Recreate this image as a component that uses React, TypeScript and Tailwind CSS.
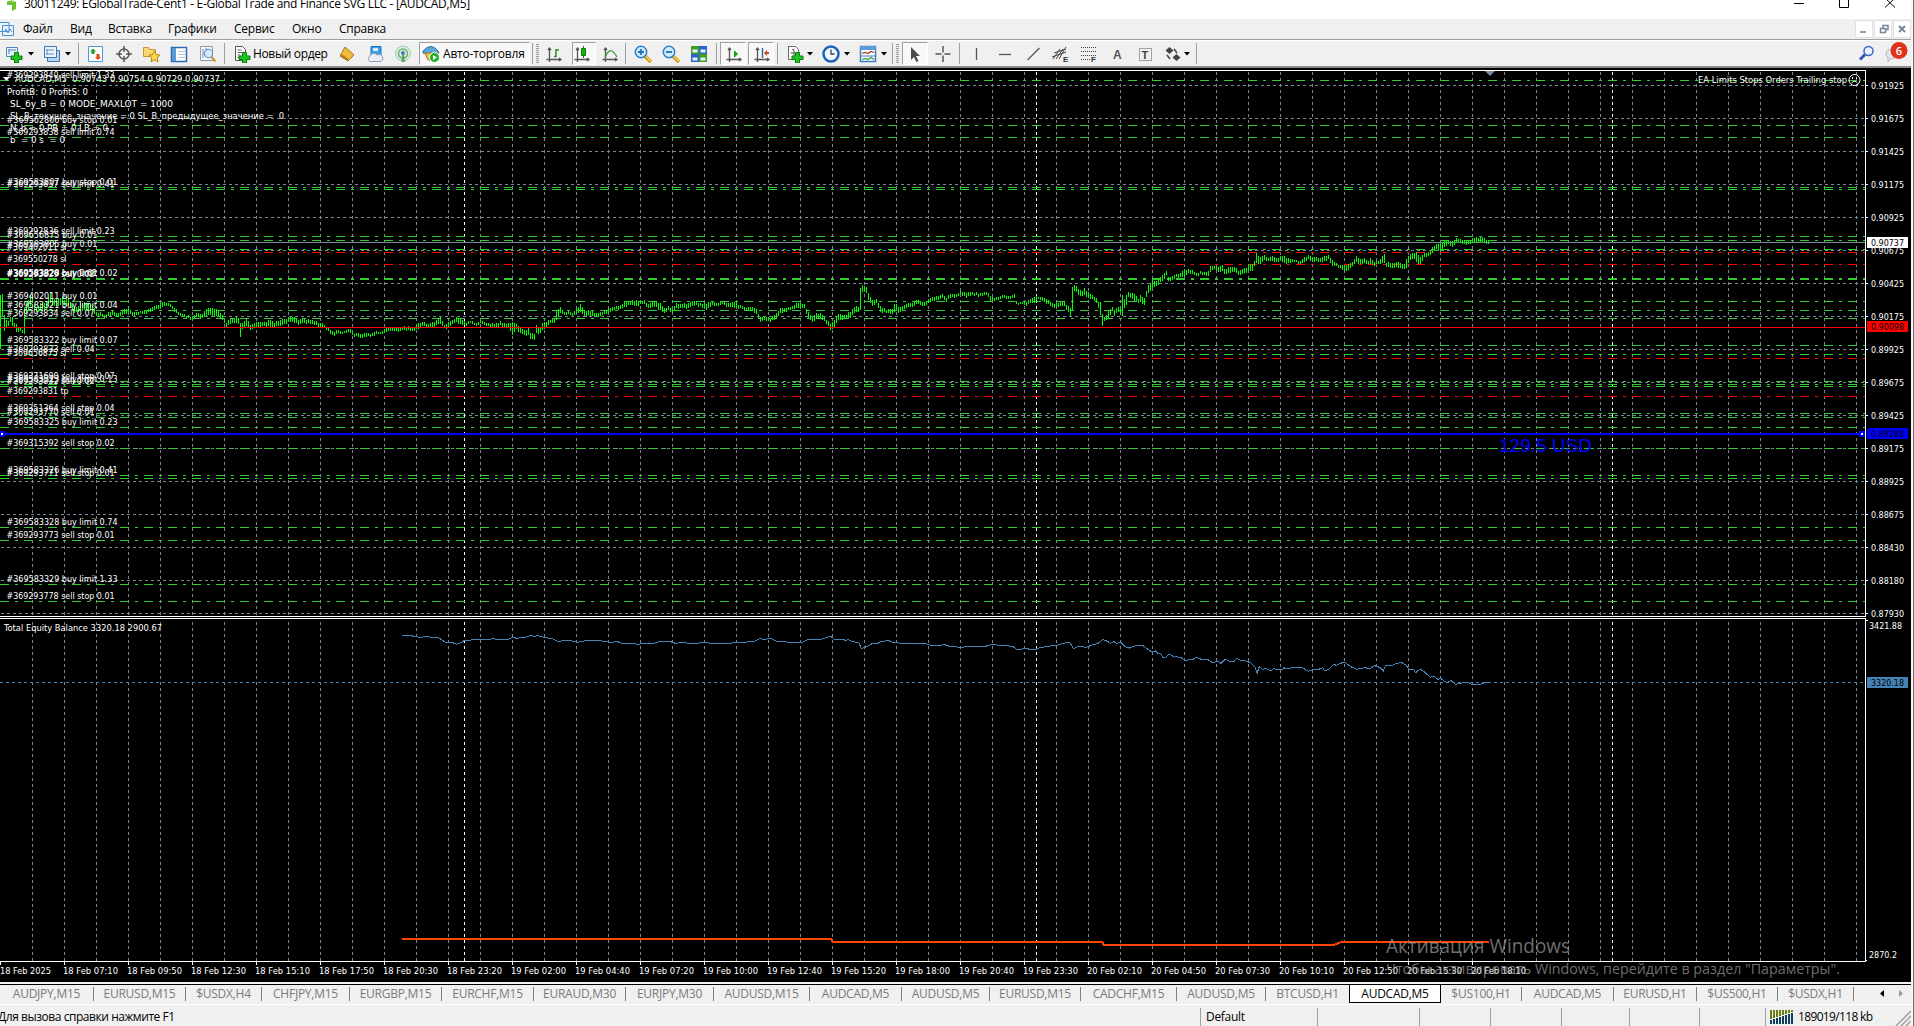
import type { ReactNode } from 'react';

const WIDTH = 1911;
const RIGHT = 1865;
const TOP = 68;

const menu = [
  { label: 'Файл', width: 47 },
  { label: 'Вид', width: 38 },
  { label: 'Вставка', width: 60 },
  { label: 'Графики', width: 66 },
  { label: 'Сервис', width: 58 },
  { label: 'Окно', width: 47 },
  { label: 'Справка', width: 60 },
];

const tabs = [
  { label: 'AUDJPY,M15', width: 94 },
  { label: 'EURUSD,M15', width: 92 },
  { label: '$USDX,H4', width: 76 },
  { label: 'CHFJPY,M15', width: 88 },
  { label: 'EURGBP,M15', width: 92 },
  { label: 'EURCHF,M15', width: 92 },
  { label: 'EURAUD,M30', width: 92 },
  { label: 'EURJPY,M30', width: 88 },
  { label: 'AUDUSD,M15', width: 96 },
  { label: 'AUDCAD,M5', width: 92 },
  { label: 'AUDUSD,M5', width: 88 },
  { label: 'EURUSD,M15', width: 91 },
  { label: 'CADCHF,M15', width: 96 },
  { label: 'AUDUSD,M5', width: 89 },
  { label: 'BTCUSD,H1', width: 83 },
  { label: 'AUDCAD,M5', width: 92, active: true },
  { label: '$US100,H1', width: 81 },
  { label: 'AUDCAD,M5', width: 92 },
  { label: 'EURUSD,H1', width: 83 },
  { label: '$US500,H1', width: 81 },
  { label: '$USDX,H1', width: 76 },
];

const prices = [
  '0.91925', '0.91675', '0.91425', '0.91175', '0.90925', '0.90675', '0.90425', '0.90175', '0.89925',
  '0.89675', '0.89425', '0.89175', '0.88925', '0.88675', '0.88430', '0.88180', '0.87930',
];

const times = [
  '18 Feb 2025', '18 Feb 07:10', '18 Feb 09:50', '18 Feb 12:30', '18 Feb 15:10', '18 Feb 17:50',
  '18 Feb 20:30', '18 Feb 23:20', '19 Feb 02:00', '19 Feb 04:40', '19 Feb 07:20', '19 Feb 10:00',
  '19 Feb 12:40', '19 Feb 15:20', '19 Feb 18:00', '19 Feb 20:40', '19 Feb 23:30', '20 Feb 02:10',
  '20 Feb 04:50', '20 Feb 07:30', '20 Feb 10:10', '20 Feb 12:50', '20 Feb 15:30', '20 Feb 18:10',
];

// [y, label, label width, stop line]
const orders: [number, string, number, boolean?][] = [
  [80, '#369293840 sell limit 1.33', 108],
  [125, '#369562806 buy stop 0.01', 111],
  [137, '#369293838 sell limit 0.74', 108],
  [187, '#369583807 buy stop 0.01', 111],
  [189, '#369293837 sell limit 0.41', 108],
  [236, '#369292836 sell limit 0.23', 108],
  [240, '#369656875 buy 0.01', 91],
  [249, '#369583805 buy 0.01', 91],
  [252, '#369402011 sl', 60, true],
  [264, '#369550278 sl', 60, true],
  [278, '#369583828 buy limit 0.02', 111],
  [278, '#369583320 buy 0.01', 91],
  [279, '#369293829 sell 0.02', 88],
  [301, '#369402011 buy 0.01', 91],
  [310, '#369583321 buy limit 0.04', 111],
  [318, '#369293834 sell 0.07', 88],
  [345, '#369583322 buy limit 0.07', 111],
  [354, '#369293833 sell 0.04', 88],
  [358, '#369656875 sl', 60, true],
  [381, '#369371690 sell stop 0.07', 108],
  [384, '#369583323 buy limit 0.13', 111],
  [386, '#369293832 sell 0.02', 88],
  [396, '#369293831 tp', 62, true],
  [413, '#369351364 sell stop 0.04', 108],
  [417, '#369293770 sell 0.01', 88],
  [427, '#369583325 buy limit 0.23', 111],
  [448, '#369315392 sell stop 0.02', 108],
  [475, '#369583326 buy limit 0.41', 111],
  [478, '#369293771 sell stop 0.01', 108],
  [527, '#369583328 buy limit 0.74', 111],
  [540, '#369293773 sell stop 0.01', 108],
  [584, '#369583329 buy limit 1.33', 111],
  [601, '#369293778 sell stop 0.01', 108],
];

// x, high, low for the price bars; bars in between are interpolated
const bars = [
  0, 295, 349, 2, 294, 316, 4, 315, 331, 6, 320, 327, 8, 321, 326, 10, 317, 322, 12, 317, 326, 14, 323, 328,
  16, 324, 332, 18, 328, 332, 20, 327, 331, 22, 330, 333, 24, 308, 334, 26, 303, 313, 28, 300, 311, 30, 295, 306,
  32, 297, 303, 34, 304, 310, 36, 307, 312, 40, 303, 311, 44, 303, 311, 48, 297, 306, 50, 292, 303, 52, 299, 306,
  56, 299, 306, 60, 298, 305, 62, 296, 303, 64, 300, 305, 66, 296, 306, 70, 302, 308, 74, 307, 313, 76, 307, 312,
  80, 303, 311, 84, 302, 310, 88, 303, 310, 92, 304, 311, 96, 312, 316, 100, 312, 316, 104, 315, 318,
  108, 312, 316, 112, 311, 315, 116, 313, 317, 120, 312, 316, 124, 309, 314, 128, 308, 312, 132, 312, 316,
  136, 312, 315, 140, 311, 313, 144, 310, 314, 148, 309, 312, 152, 307, 311, 156, 305, 309, 160, 303, 308,
  162, 302, 307, 166, 303, 306, 170, 304, 307, 174, 308, 312, 178, 312, 315, 184, 314, 317, 190, 317, 320,
  194, 315, 318, 198, 313, 317, 202, 314, 318, 206, 309, 316, 210, 308, 315, 214, 309, 317, 218, 310, 317,
  222, 315, 320, 224, 318, 323, 226, 323, 328, 230, 318, 324, 234, 318, 323, 238, 318, 324, 240, 323, 337,
  242, 323, 329, 246, 319, 326, 250, 325, 330, 254, 323, 328, 258, 322, 327, 262, 322, 326, 266, 322, 327,
  270, 320, 327, 274, 323, 328, 278, 321, 326, 282, 319, 325, 286, 319, 324, 290, 317, 322, 294, 317, 323,
  298, 320, 325, 302, 318, 323, 306, 320, 324, 310, 320, 324, 314, 321, 325, 318, 323, 327, 322, 323, 327,
  326, 327, 330, 330, 330, 334, 334, 332, 336, 338, 330, 333, 342, 332, 334, 346, 330, 333, 350, 329, 333,
  354, 334, 337, 358, 333, 337, 362, 334, 338, 366, 333, 337, 370, 334, 337, 374, 332, 336, 378, 332, 334,
  382, 331, 334, 386, 328, 332, 390, 328, 331, 396, 328, 331, 404, 326, 330, 412, 328, 331, 418, 323, 329,
  422, 322, 326, 428, 324, 328, 434, 322, 327,
  438, 319, 324, 440, 317, 324, 444, 325, 328, 448, 322, 328, 452, 320, 324, 456, 317, 322, 462, 320, 325,
  466, 323, 326, 470, 321, 323, 476, 323, 326, 480, 320, 323, 486, 323, 326, 490, 324, 328, 496, 323, 328,
  500, 321, 325, 502, 323, 328, 508, 323, 327, 512, 322, 335, 516, 324, 329, 520, 327, 333, 524, 330, 335,
  528, 328, 335, 530, 333, 339, 534, 334, 340, 536, 325, 333, 540, 328, 333, 542, 323, 330, 546, 322, 328,
  550, 320, 323, 554, 318, 323, 556, 310, 320, 560, 307, 313, 564, 312, 315, 568, 311, 314, 572, 313, 316,
  576, 308, 313, 580, 304, 312, 584, 310, 316, 590, 311, 316, 596, 313, 317, 602, 312, 315, 608, 308, 313,
  614, 307, 310, 620, 305, 309, 624, 302, 307, 630, 301, 305, 636, 300, 306, 640, 301, 304, 644, 300, 304,
  648, 304, 308, 654, 301, 307, 660, 303, 310, 664, 308, 313, 668, 306, 310, 672, 309, 313, 676, 303, 308,
  682, 304, 308, 688, 303, 308, 694, 301, 306, 700, 303, 306, 706, 304, 310, 712, 301, 305, 716, 303, 306,
  722, 302, 304, 728, 303, 307, 734, 302, 308, 740, 305, 308, 746, 308, 311, 752, 307, 311, 756, 309, 314,
  760, 317, 322, 764, 316, 320, 770, 318, 322, 776, 313, 318, 780, 308, 313, 786, 308, 312, 792, 306, 309,
  798, 303, 308, 804, 304, 308, 808, 312, 318, 812, 317, 322, 816, 313, 319, 820, 313, 318, 824, 317, 321,
  828, 321, 326, 830, 324, 330, 834, 320, 328, 838, 314, 320, 844, 315, 319, 850, 312, 318, 854, 307, 313,
  858, 307, 312, 860, 288, 310, 862, 285, 292, 866, 287, 293, 868, 293, 300, 872, 300, 306, 876, 299, 303,
  880, 306, 312, 886, 310, 313, 892, 309, 314, 894, 304, 312, 900, 307, 312, 906, 304, 308, 912, 303, 307,
  918, 300, 304, 924, 302, 306, 930, 298, 302, 936, 296, 300, 942, 294, 298, 946, 298, 302, 950, 294, 298,
  956, 294, 297, 960, 291, 294, 966, 293, 298, 972, 292, 295, 980, 293, 296, 986, 292, 295, 990, 296, 301,
  994, 298, 301, 1000, 296, 299, 1002, 295, 298, 1008, 296, 299, 1012, 295, 298, 1014, 294, 298,
  1016, 302, 304, 1022, 302, 304, 1026, 302, 306, 1030, 299, 303, 1034, 297, 303, 1038, 297, 299,
  1042, 297, 301, 1046, 299, 304, 1050, 302, 306, 1054, 304, 308, 1060, 302, 306, 1064, 302, 306,
  1068, 306, 312, 1070, 308, 316, 1072, 287, 310, 1074, 285, 291, 1078, 289, 295, 1082, 291, 296,
  1084, 288, 295, 1088, 292, 298, 1092, 295, 299, 1096, 298, 303, 1098, 302, 308, 1100, 302, 315,
  1102, 314, 326, 1104, 317, 321, 1108, 311, 318, 1112, 307, 311, 1114, 310, 316, 1118, 307, 312,
  1120, 308, 313, 1122, 295, 316, 1124, 299, 308, 1126, 295, 305, 1128, 292, 297, 1134, 294, 301,
  1138, 299, 303, 1140, 295, 302, 1144, 298, 305, 1146, 291, 297, 1148, 285, 293, 1152, 280, 288,
  1156, 281, 286, 1160, 277, 282, 1164, 273, 279, 1166, 271, 275, 1168, 277, 281, 1172, 276, 280,
  1176, 274, 277, 1180, 273, 277, 1184, 269, 276, 1188, 269, 273, 1192, 270, 274, 1196, 273, 276,
  1200, 271, 274, 1204, 272, 275, 1208, 271, 276, 1210, 266, 272, 1214, 266, 269, 1218, 267, 272,
  1222, 265, 271, 1224, 269, 274, 1230, 267, 273, 1234, 267, 272, 1238, 271, 275, 1242, 269, 274,
  1246, 268, 273, 1248, 264, 271, 1252, 264, 271, 1254, 261, 266, 1256, 253, 263, 1260, 257, 264,
  1264, 255, 260, 1268, 258, 261, 1272, 256, 261, 1276, 258, 262, 1280, 256, 260, 1284, 256, 263,
  1288, 258, 263, 1292, 259, 262, 1296, 260, 262, 1300, 261, 264, 1304, 257, 262, 1308, 255, 259,
  1312, 257, 262, 1316, 257, 261, 1320, 258, 262, 1324, 256, 261, 1328, 255, 259, 1332, 260, 266,
  1336, 263, 266, 1340, 265, 268, 1344, 265, 271, 1348, 264, 270, 1352, 262, 266, 1356, 256, 262,
  1360, 259, 264, 1364, 258, 263, 1368, 261, 264, 1370, 258, 264, 1374, 262, 266, 1378, 261, 264,
  1382, 256, 263, 1384, 254, 263, 1386, 263, 267, 1392, 263, 268, 1398, 262, 268, 1404, 264, 269,
  1406, 259, 268, 1410, 254, 260, 1414, 253, 259, 1416, 252, 262, 1420, 257, 264, 1424, 253, 257,
  1428, 252, 256, 1432, 247, 253, 1436, 244, 249, 1440, 243, 252, 1444, 240, 247, 1448, 241, 244,
  1452, 241, 247, 1456, 238, 242, 1460, 239, 243, 1464, 240, 244, 1468, 241, 244, 1472, 238, 243,
  1476, 237, 242, 1482, 237, 242, 1486, 240, 244, 1488, 240, 244,
];

const equity =
  '31,107 45,108 55,112 65,110 82,114 90,126 100,127 106,133 112,128 118,120 122,122 130,118 150,118 158,116 164,119 178,118 184,112 190,115 203,111 210,106 214,110 218,107 228,112 240,117 246,124 262,121 274,127 285,122 305,122 320,127 330,125 336,131 350,130 358,133 368,130 378,131 388,125 403,125 410,130 422,127 430,131 440,130 450,127 460,130 482,130 500,127 518,125 527,116 535,119 541,114 550,124 565,126 578,128 586,127 594,118 612,118 625,109 632,120 640,117 646,121 650,119 655,125 664,127 668,146 675,140 684,130 690,132 695,124 706,122 712,128 728,130 757,131 765,136 778,137 782,133 790,139 805,142 820,139 840,139 850,133 860,136 878,139 884,150 895,145 907,150 915,144 925,139 940,136 948,130 957,127 962,146 970,139 980,142 990,133 996,131 1003,118 1010,125 1014,130 1018,124 1022,130 1028,127 1034,140 1040,144 1050,136 1058,136 1068,152 1072,156 1076,153 1080,162 1083,160 1086,172 1090,173 1094,163 1098,165 1102,172 1105,169 1112,174 1118,181 1128,178 1132,172 1138,177 1148,178 1155,188 1162,184 1167,190 1173,178 1178,183 1185,184 1189,175 1193,180 1202,183 1209,190 1214,200 1217,220 1220,200 1224,208 1230,206 1236,213 1240,206 1245,210 1252,210 1254,203 1258,207 1268,202 1280,203 1288,214 1296,208 1304,207 1308,203 1311,213 1316,208 1323,193 1327,196 1333,190 1338,186 1342,192 1348,201 1355,208 1366,203 1374,206 1380,197 1388,203 1392,213 1396,195 1403,197 1411,190 1418,188 1424,196 1428,210 1434,208 1437,218 1443,207 1450,217 1457,232 1462,228 1468,238 1472,236 1480,248 1486,241 1492,253 1502,249 1510,248 1516,254 1526,253 1532,249 1538,248';

function barPath() {
  let d = '';
  for (let i = 0; i < bars.length; i += 3) {
    const [x, hi, lo, nx, nhi, nlo] = bars.slice(i, i + 6);
    d += `M${x + 0.5} ${hi}V${lo}`;
    if (nx === undefined) break;
    for (let k = x + 2; k < nx; k += 2) {
      const t = (k - x) / (nx - x);
      const wobble = (k % 4 ? 1 : -1) * ((k % 10) / 10);
      d += `M${k + 0.5} ${Math.round(hi + (nhi - hi) * t + wobble)}V${Math.round(lo + (nlo - lo) * t + wobble)}`;
    }
  }
  return d;
}

const Label = ({ x, y, w, fill = '#fff', children }: { x: number; y: number; w?: number; fill?: string; children: string }) => (
  <text x={x} y={y} fill={fill} textLength={w} lengthAdjust="spacingAndGlyphs" xmlSpace="preserve">
    {children}
  </text>
);

const PriceTag = ({ y, fill, color, children }: { y: number; fill: string; color: string; children: string }) => (
  <>
    <rect x={1867} y={y} width={41} height={11} fill={fill} />
    <Label x={1871} y={y + 9} w={33} fill={color}>{children}</Label>
  </>
);

const Chart = () => (
  <svg
    width={WIDTH}
    height={914}
    viewBox={`0 ${TOP} ${WIDTH} 914`}
    className="block shrink-0 bg-black font-['DejaVu_Sans_Condensed','DejaVu_Sans',sans-serif] text-[9px]"
  >
    <g shapeRendering="crispEdges" fill="none">
      <g stroke="#778899">
        {prices.map((p, i) => (
          <path key={p} d={`M1 ${85.5 + i * 33}H${RIGHT}`} strokeDasharray="3 3" />
        ))}
        {Array.from({ length: 58 }, (_, i) => (
          <path key={i} d={`M${32.5 + i * 32} 72V616M${32.5 + i * 32} 622V961`} strokeDasharray="3 3" />
        ))}
      </g>
      {[464.5, 1036.5, 1612.5].map((x) => (
        <path key={x} d={`M${x} 72V616M${x} 622V961`} stroke="#fff" strokeDasharray="3 3" />
      ))}
      {orders.map(([y, text, , stop]) => (
        <path key={text} d={`M0 ${y + 0.5}H${RIGHT}`} stroke={stop ? '#ff0000' : '#32cd32'} strokeDasharray="9 6 3 6" />
      ))}
      <path d={`M0 242.5H${RIGHT}`} stroke="#778899" />
      <path d={barPath()} stroke="#00ff00" />
      <path d={`M0 327.5H${RIGHT}`} stroke="#ff0000" />
      <path d={`M0 434H${RIGHT}`} stroke="#0000ff" strokeWidth={2} />
      <path d={`M0 682.5H${RIGHT}`} stroke="#4682b4" strokeDasharray="3 3" />
      <path d="M402 939H831L833 942H1102L1104 945H1334L1341 942H1489" stroke="#ff4500" strokeWidth={2} />
      <polyline
        points={equity}
        transform="translate(380 600) scale(.7207 .3333)"
        stroke="#4682b4"
        vectorEffect="non-scaling-stroke"
      />
      {/* frames and axis ticks */}
      <g stroke="#fff">
        <path d={`M0 70.5H${RIGHT + 0.5}V616.5H0M0 618.5H${RIGHT + 0.5}V961.5H0`} />
        {prices.map((p, i) => (
          <path key={p} d={`M${RIGHT} ${85.5 + i * 33}h3`} />
        ))}
        {times.map((t, i) => (
          <path key={t} d={`M${i * 64 + 0.5} 961v4`} />
        ))}
        <path d="M1865 620.5h3M1865 960.5h2" />
      </g>
      <g strokeWidth={2} stroke="#00f" fill="#fff">
        <path d="M0 432h4v4H0zM1860 432h4v4h-4z" />
      </g>
    </g>

    {orders.map(([y, text, w], i) => (
      <Label key={i} x={6.5} y={y - 2} w={w}>{text}</Label>
    ))}
    <path d="M3 77h7l-3.500 4z" fill="#fff" />
    <Label x={15} y={82} w={205}>AUDCAD,M5  0.90743 0.90754 0.90729 0.90737</Label>
    <Label x={7} y={95} w={81}>ProfitB: 0 ProfitS: 0</Label>
    <Label x={10} y={107} w={163}>SL_бу_B = 0 MODE_MAXLOT = 1000</Label>
    <Label x={10} y={119} w={274}>SL_B_текущее_значение = 0 SL_B_предыдущее_значение =  0</Label>
    <Label x={10} y={131} w={98}>N_b = 0 PB = 0 LB = 0</Label>
    <Label x={10} y={143} w={55}>b  = 0 s  = 0</Label>
    <Label x={1698} y={83} w={149}>EA Limits Stops Orders Trailing stop</Label>
    <g stroke="#fff" fill="none">
      <circle cx={1854.500} cy={80} r={5.500} />
      <path d="M1851.500 83q3-3.500 6 0M1852.500 77v2M1856.500 77v2" />
    </g>
    <path d="M1485 71h10l-5 5z" fill="#778899" />

    {prices.map((p, i) => (
      <Label key={p} x={1871} y={89 + i * 33} w={33}>{p}</Label>
    ))}
    <PriceTag y={237} fill="#fff" color="#000">0.90737</PriceTag>
    <PriceTag y={321} fill="#f00" color="#000">0.90098</PriceTag>
    <PriceTag y={428} fill="#00f" color="#000">0.89288</PriceTag>
    <PriceTag y={677} fill="#4682b4" color="#000">3320.18</PriceTag>
    <Label x={1869} y={629} w={33}>3421.88</Label>
    <Label x={1869} y={958} w={28}>2870.2</Label>
    <Label x={4} y={631} w={158}>Total Equity Balance 3320.18 2900.67</Label>
    {times.map((t, i) => (
      <Label key={t} x={i * 64 - (i ? 1 : 0)} y={974} w={i ? 55 : 51}>{t}</Label>
    ))}
    <text x={1499} y={452} fill="#00f" textLength={93} className="font-['Liberation_Sans',sans-serif] text-[19px]">129.5 USD</text>
    <g fill="#a0a0a0" fillOpacity={0.7} className="font-['Open_Sans','Noto_Sans',sans-serif]">
      <text x={1386} y={953} textLength={184} lengthAdjust="spacingAndGlyphs" className="text-[20px]">Активация Windows</text>
      <text x={1386} y={974} textLength={454} lengthAdjust="spacingAndGlyphs" className="text-[14.500px]">
        Чтобы активировать Windows, перейдите в раздел "Параметры".
      </text>
    </g>
  </svg>
);

const Icon = ({ className = '', children }: { className?: string; children: ReactNode }) => (
  <svg width={18} height={18} viewBox="0 0 18 18" fill="none" className={`shrink-0 ${className}`}>
    {children}
  </svg>
);

const Caret = ({ className }: { className: string }) => (
  <svg width={6} height={4} viewBox="0 0 6 4" className={`shrink-0 ${className}`}>
    <path d="M0 0h6L3 3.500z" fill="#000" />
  </svg>
);

const Sep = ({ className }: { className: string }) => <div className={`h-[21px] w-px shrink-0 bg-[#a0a0a0] ${className}`} />;

const Grip = ({ className }: { className: string }) => (
  <div className={`flex shrink-0 flex-col gap-px ${className}`}>
    {Array.from({ length: 10 }, (_, i) => (
      <div key={i} className="h-px w-[3px] bg-[#9a9a9a]" />
    ))}
  </div>
);

const Pressed = ({ className, children }: { className: string; children: ReactNode }) => (
  <div className={`flex h-[23px] shrink-0 items-center border border-t-[#a0a0a0] border-r-white border-b-white border-l-[#a0a0a0] bg-[#f8f8f8] ${className}`}>
    {children}
  </div>
);

const Plus = () => <path d="M9.500 7.500h4v3.500h3.500v3.500h-3.500V18h-4v-3.500H6V11h3.500z" fill="#1fc41f" stroke="#0a7d12" />;
const Axes = () => <path d="M4.500 3v14M1.500 14.500H16M3 5l1.500-2L6 5M14 13l2 1.500-2 1.500" stroke="#555" strokeWidth={1.3} />;

const Magnifier = ({ plus }: { plus?: boolean }) => (
  <>
    <path d="M11 11l6 6" stroke="#b8860b" strokeWidth={3.500} />
    <path d="M11.500 11l5.500 5.500" stroke="#f3cf45" strokeWidth={2} />
    <circle cx={7} cy={7} r={5.700} fill="#cfeafc" stroke="#2f7fc4" strokeWidth={1.500} />
    <path d={plus ? 'M4 7h6M7 4v6' : 'M4 7h6'} stroke="#2a6fae" strokeWidth={1.800} />
  </>
);

const Toolbar = () => (
  <div className="flex h-[25px] items-center bg-[#f0f0f0]">
    <Icon className="ml-[5px]">
      <path d="M1.500 2.500h11v9h-11zM3 5h8M4 4v5" fill="#e8f3fd" stroke="#4f88bd" />
      <Plus />
    </Icon>
    <Caret className="ml-[5px]" />
    <Icon className="ml-[9px]">
      <path d="M4.500 5.500h12v11h-12z" fill="#b7d5f2" stroke="#3f76ae" />
      <path d="M1.500 1.500h12v11h-12z" fill="#eaf4fe" stroke="#3f76ae" />
      <path d="M3 5h8M4 4v6M3 9h8" stroke="#5c8fc0" />
    </Icon>
    <Caret className="ml-[4px]" />
    <Sep className="ml-[7px]" />
    <Icon className="ml-[8px]">
      <path d="M1.500 1.500h14v15h-14z" fill="#fff" stroke="#4d9ad8" />
      <path d="M6 3.500l3 3H7.500V9h-3V6.500H3z" fill="#22a022" />
      <path d="M11 15l-3-3h1.500V9h3v3H14z" fill="#e2461c" />
    </Icon>
    <Icon className="ml-[10px]">
      <circle cx={9} cy={9} r={5} stroke="#555" strokeWidth={1.500} />
      <path d="M9 1v6M9 11v6M1 9h6M11 9h6" stroke="#555" strokeWidth={1.500} />
    </Icon>
    <Icon className="ml-[10px]">
      <path d="M.5 2.500h5l1 2h6v7h-12z" fill="#f7d774" stroke="#c9952a" />
      <path d="M11.500 6l1.700 3.600 3.800.5-2.800 2.700.8 4-3.500-2-3.500 2 .8-4L6 10.100l3.800-.5z" fill="#ffd84a" stroke="#b8860b" />
    </Icon>
    <Icon className="ml-[9px]">
      <path d="M1.500 2.500h15v14h-15z" fill="#fff" stroke="#2c6db0" strokeWidth={1.500} />
      <path d="M2 3h4v13H2z" fill="#5b9ad5" />
      <path d="M8 6.500h7M8 9.500h7M8 12.500h7" stroke="#b3c6dc" />
    </Icon>
    <Icon className="ml-[11px]">
      <path d="M1.500 1.500h12v14h-12z" fill="#f4f7fa" stroke="#8a9bb0" />
      <path d="M4 4v9M7 3v8" stroke="#6b89ad" />
      <circle cx={9.500} cy={8.500} r={4.200} fill="#cfe6fa" fillOpacity={0.8} stroke="#4c8ac6" />
      <path d="M12.500 12l4 4.500" stroke="#caa02a" strokeWidth={2.500} />
    </Icon>
    <Sep className="ml-[7px]" />
    <Icon className="ml-[8px]">
      <path d="M2.500 1.500h7l3 3v11h-10z" fill="#fff" stroke="#555" />
      <path d="M4.500 5h4M4.500 7.500h5M4.500 10h3M4.500 12.500h2" stroke="#666" />
      <Plus />
    </Icon>
    <span className="ml-[2px] w-[75px] text-[12px] tracking-[-0.35px] whitespace-nowrap">Новый ордер</span>
    <Icon className="ml-[10px]">
      <path d="M7 2l9 8-6 6L2 11z" fill="#f0bc3c" stroke="#a8741a" />
      <path d="M2 11l8 5v-2.500L3 9z" fill="#b37c1c" />
    </Icon>
    <Icon className="ml-[10px]">
      <path d="M5 1.500h10v9H5z" fill="#3f9ee8" stroke="#1b73c4" />
      <path d="M7 3h5v3H7z" fill="#d7edff" />
      <path d="M4 16.500a3 3 0 010-5.500 4 4 0 017-1 3.200 3.200 0 014 6.500z" fill="#e9eef5" stroke="#8d9db5" />
    </Icon>
    <Icon className="ml-[10px]">
      <circle cx={9} cy={8.500} r={7.500} fill="#d9ead9" stroke="#a9c9ad" />
      <circle cx={9} cy={8.500} r={4.500} stroke="#6bb06f" strokeWidth={1.500} />
      <circle cx={9} cy={8} r={2} fill="#3d7ec2" />
      <path d="M8 10h2l1 7H7.500z" fill="#58a85c" />
    </Icon>
    <Pressed className="ml-[7px] w-[111px]">
      <Icon className="ml-[2px]">
        <path d="M1 6q8-9 15 0l1 2q-8 3-16 0z" fill="#5aa9dc" stroke="#27719f" />
        <path d="M3 8h12l-3 7H6z" fill="#efc14d" stroke="#a8771c" />
        <circle cx={12.500} cy={12.500} r={5} fill="#1fae2c" stroke="#fff" />
        <path d="M11 10v5l4-2.500z" fill="#fff" />
      </Icon>
      <span className="ml-[3px] text-[12px] tracking-[-0.2px]">Авто-торговля</span>
    </Pressed>
    <Sep className="ml-[2px]" />
    <Grip className="ml-[3px]" />
    <Icon className="ml-[6px]">
      <Axes />
      <path d="M11 4v8M9 11.500h2M11 5h3" stroke="#2b8f2b" strokeWidth={1.500} />
    </Icon>
    <Pressed className="ml-[9px] w-[24px]">
      <Icon>
        <Axes />
        <path d="M10.500 1v12" stroke="#0a7d12" />
        <path d="M8.500 3.500h4v7h-4z" fill="#14b314" stroke="#0a7d12" />
      </Icon>
    </Pressed>
    <Icon className="ml-[5px]">
      <Axes />
      <path d="M4 12q4-8 7-6t5 6" stroke="#3c9b3c" strokeWidth={1.300} />
    </Icon>
    <Sep className="ml-[6px]" />
    <Icon className="ml-[8px]"><Magnifier plus /></Icon>
    <Icon className="ml-[10px]"><Magnifier /></Icon>
    <Icon className="ml-[10px]">
      <path d="M1 1h8v8H1zM9 9h8v8H9z" fill="#3f9e1e" />
      <path d="M9 1h8v8H9zM1 9h8v8H1z" fill="#2c64cf" />
      <path d="M2.500 4.500h5v3h-5zM10.500 4.500h5v3h-5zM2.500 12.500h5v3h-5zM10.500 12.500h5v3h-5z" fill="#e8f0fb" />
    </Icon>
    <Sep className="ml-[8px]" />
    <Pressed className="ml-[3px] w-[26px]">
      <Icon className="ml-[4px]">
        <Axes />
        <path d="M9 5v8l4-4z" fill="#17a117" />
      </Icon>
    </Pressed>
    <Pressed className="ml-[2px] w-[26px]">
      <Icon className="ml-[4px]">
        <Axes />
        <path d="M9.500 3v10" stroke="#2b6ca3" strokeWidth={1.500} />
        <path d="M11 8l3-3v2h2v2h-2v2z" fill="#d2451a" />
      </Icon>
    </Pressed>
    <Sep className="ml-[3px]" />
    <Icon className="ml-[8px]">
      <path d="M2.500 1.500h7l3 3v10h-10z" fill="#fff" stroke="#666" />
      <path d="M6 5q2-2 2 1v6M4.500 8h5" stroke="#555" />
      <Plus />
    </Icon>
    <Caret className="ml-[3px]" />
    <Icon className="ml-[9px]">
      <circle cx={9} cy={9} r={7.500} fill="#eef6ff" stroke="#1d63b8" strokeWidth={2.500} />
      <path d="M9 4.500V9h3.500" stroke="#444" strokeWidth={1.300} />
    </Icon>
    <Caret className="ml-[4px]" />
    <Icon className="ml-[9px]">
      <path d="M1.500 1.500h15v15h-15z" fill="#fff" stroke="#3a7cc0" strokeWidth={1.500} />
      <path d="M1 1h16v4H1z" fill="#5b9ad5" />
      <path d="M3 8.500l3-1 3 1 3-2 3 1" stroke="#a63a1a" strokeWidth={1.300} />
      <path d="M2 11h14" stroke="#3a7cc0" />
      <path d="M3 14.500l3-1 3 1 3-2 3 2" stroke="#2e9a3a" strokeWidth={1.300} />
    </Icon>
    <Caret className="ml-[4px]" />
    <Sep className="ml-[5px]" />
    <Grip className="ml-[3px]" />
    <Pressed className="ml-[3px] w-[26px]">
      <Icon className="ml-[3px]">
        <path d="M5 2v13l3-3 2.500 5 2-1-2.500-5H14z" fill="#4a4a4a" />
      </Icon>
    </Pressed>
    <Icon className="ml-[6px]">
      <path d="M9 1v6.500M9 10.500V17M1.500 9h6M10.500 9h6" stroke="#555" strokeWidth={1.500} />
    </Icon>
    <Sep className="ml-[7px]" />
    <Icon className="ml-[8px]"><path d="M8.500 3v12" stroke="#555" strokeWidth={1.300} /></Icon>
    <Icon className="ml-[10px]"><path d="M3 9.500h12" stroke="#555" strokeWidth={1.300} /></Icon>
    <Icon className="ml-[11px]"><path d="M2.500 15l12-12" stroke="#555" strokeWidth={1.300} /></Icon>
    <Icon className="ml-[9px]">
      <path d="M1 14L8 4M4 14l7-10M7 14l7-12M0 12l14-5M2 8l12-4" stroke="#444" />
      <text x={11} y={17} fill="#333" className="font-['Liberation_Sans',sans-serif] text-[8px] font-bold">E</text>
    </Icon>
    <Icon className="ml-[10px]">
      <path d="M1 2.500h15M1 6.500h15M1 10.500h15M1 14.500h9" stroke="#444" strokeDasharray="1 1" />
      <text x={11} y={17} fill="#333" className="font-['Liberation_Sans',sans-serif] text-[8px] font-bold">F</text>
    </Icon>
    <Icon className="ml-[11px]">
      <text x={4} y={14} fill="#555" className="font-['Liberation_Sans',sans-serif] text-[12px] font-bold">A</text>
    </Icon>
    <Icon className="ml-[9px]">
      <path d="M3.500 3.500h12v12h-12z" stroke="#555" strokeDasharray="1 1" />
      <text x={5.500} y={14} fill="#444" className="font-['Liberation_Sans',sans-serif] text-[11px] font-bold">T</text>
    </Icon>
    <Icon className="ml-[10px]">
      <path d="M5.500 2l4 3.500-4 3.500-4-3.500zM12.500 9l4 3.500-4 3.500-4-3.500z" fill="#444" />
      <path d="M3 10l3 4M10 4l3 4" stroke="#444" strokeWidth={1.500} />
    </Icon>
    <Caret className="ml-[2px]" />
    <Sep className="ml-[6px]" />
    <div className="flex-1" />
    <Icon>
      <circle cx={10.500} cy={6} r={4.500} fill="#e6f0ff" stroke="#3a67c4" strokeWidth={1.500} />
      <path d="M7 9.500L2 14.500" stroke="#2d58b8" strokeWidth={3} />
    </Icon>
    <svg width={26} height={22} viewBox="0 0 26 22" className="mr-px mb-[3px] ml-[8px] shrink-0">
      <path d="M2 13a6 5 0 016-5h3v9l-5 1-2 3v-4a5 5 0 01-2-4z" fill="#e4e4ec" stroke="#b5b5bd" />
      <circle cx={15} cy={9.500} r={8.500} fill="#e0331c" />
      <text x={15} y={13.500} textAnchor="middle" fill="#fff" className="font-['Open_Sans',sans-serif] text-[11px] font-semibold">6</text>
    </svg>
  </div>
);

const TitleBar = () => (
  <div className="flex h-[19px] overflow-hidden bg-white">
    <svg width={24} height={19} viewBox="0 0 24 19" className="shrink-0">
      <path d="M13 0L7 1.500V5h5v6l4-2V1.500H11L14 0z" fill="#6cbf2f" />
    </svg>
    <div className="-mt-[7px] text-[12px] leading-[21px] tracking-[-0.33px] whitespace-nowrap">
      30011249: EGlobalTrade-Cent1 - E-Global Trade and Finance SVG LLC - [AUDCAD,M5]
    </div>
    <div className="flex-1" />
    <svg width={120} height={19} viewBox="0 0 120 19" fill="none" stroke="#000" className="shrink-0">
      <path d="M3 3.500h10M48.500-3v10.500h9V-3M94 -2l10 9.500M104 -2l-10 9.500" />
    </svg>
  </div>
);

const MenuBar = () => (
  <div className="flex h-[20px] items-center bg-[#f0f0f0]">
    <svg width={23} height={18} viewBox="0 0 23 18" fill="#eaf4fe" stroke="#4a90d0" className="shrink-0">
      <path d="M-2 2.500h11v9H-2zM2.500 5.500h11v10h-11z" />
      <path d="M4 12l2-3 2 4 2-4 2 3" fill="none" />
    </svg>
    {menu.map((m) => (
      <div key={m.label} className="shrink-0 text-[12px] tracking-[-0.25px]" style={{ width: m.width }}>
        {m.label}
      </div>
    ))}
    <div className="flex-1" />
    <svg width={57} height={18} viewBox="0 0 57 18" className="-mr-px shrink-0">
      <g fill="#fff" stroke="#e2e2e2">
        <path d="M.5.500h17v17H.5zM19.500.500h17v17h-17zM38.500.500h17v17h-17z" />
      </g>
      <path d="M5 12h6M25.500 8.500h5v4h-5zM28 8V5.500h5v4h-2" fill="none" stroke="#75859a" strokeWidth={1.500} />
      <path d="M44 6l6 6M50 6l-6 6" stroke="#75859a" strokeWidth={2} />
    </svg>
  </div>
);

const TabBar = () => (
  <div className="flex h-[19px] bg-[#f0f0f0]">
    {tabs.map((t, i) =>
      t.active ? (
        <div key={i} className="h-[18px] shrink-0 border-x border-b border-black bg-white text-center text-[12px] leading-[17px] tracking-[-0.25px] text-black" style={{ width: t.width }}>
          {t.label}
        </div>
      ) : (
        <div key={i} className="flex h-[17px] shrink-0 items-center text-[12px] tracking-[-0.25px] text-[#7a7a7a]" style={{ width: t.width }}>
          <div className="flex-1 text-center">{t.label}</div>
          {!tabs[i + 1]?.active && <div className="h-[14px] w-px bg-[#808080]" />}
        </div>
      ),
    )}
    <svg width={30} height={19} viewBox="0 0 30 19" className="ml-[26px] shrink-0">
      <path d="M4 5v7L0 8.500z" fill="#000" />
      <path d="M19 5v7l4-3.500z" fill="#999" />
    </svg>
  </div>
);

const StatusBar = () => (
  <div className="flex h-[21px] bg-[#f0f0f0] pt-[3px] text-[12px] leading-[18px] tracking-[-0.3px]">
    <div className="-ml-[2px] w-[1202px] shrink-0 tracking-[-0.45px]">Для вызова справки нажмите F1</div>
    <div className="w-[117px] shrink-0 border-l border-[#a0a0a0] pl-[5px]">Default</div>
    <div className="w-[102px] shrink-0 border-l border-[#a0a0a0]" />
    <div className="w-[71px] shrink-0 border-l border-[#a0a0a0]" />
    <div className="w-[71px] shrink-0 border-l border-[#a0a0a0]" />
    <div className="w-[68px] shrink-0 border-l border-[#a0a0a0]" />
    <div className="w-[70px] shrink-0 border-l border-[#a0a0a0]" />
    <div className="w-[66px] shrink-0 border-l border-[#a0a0a0]" />
    <div className="flex flex-1 border-l border-[#a0a0a0] pl-[4px]">
      <svg width={24} height={15} viewBox="0 0 24 15" shapeRendering="crispEdges" className="mt-[2px] mr-[4px]">
        {Array.from({ length: 8 }, (_, i) => (
          <g key={i}>
            <rect x={i * 3} y={0} width={2} height={9 - i} fill="#6b7d10" />
            <rect x={i * 3} y={10 - i} width={2} height={4 + i} fill="#0f4060" />
          </g>
        ))}
      </svg>
      <span className="tracking-[-0.65px]">189019/118 kb</span>
      <div className="flex-1" />
      <svg width={16} height={18} viewBox="0 0 16 18" stroke="#a0a0a0" strokeWidth={1.500}>
        <path d="M1 18L16 3M6 18L16 8M11 18l5-5" />
      </svg>
    </div>
  </div>
);

const App = () => {
  return (
    <div className="flex h-[1026px] w-[1914px] overflow-hidden bg-[#f0f0f0] font-['Open_Sans','Noto_Sans',sans-serif] text-black">
      <div className="flex w-[1911px] flex-col">
        <TitleBar />
        <MenuBar />
        <div className="h-px bg-[#a0a0a0]" />
        <div className="h-px bg-white" />
        <Toolbar />
        <div className="h-[2px] bg-[#8c8c8c]" />
        <Chart />
        <div className="h-[2px] bg-[#f6f6f6]" />
        <div className="h-px bg-black" />
        <TabBar />
        <div className="h-px bg-white" />
        <StatusBar />
      </div>
      <div className="w-[2px] bg-[#f4f4f4]" />
      <div className="w-px bg-[#707070]" />
    </div>
  );
};

export default App;
